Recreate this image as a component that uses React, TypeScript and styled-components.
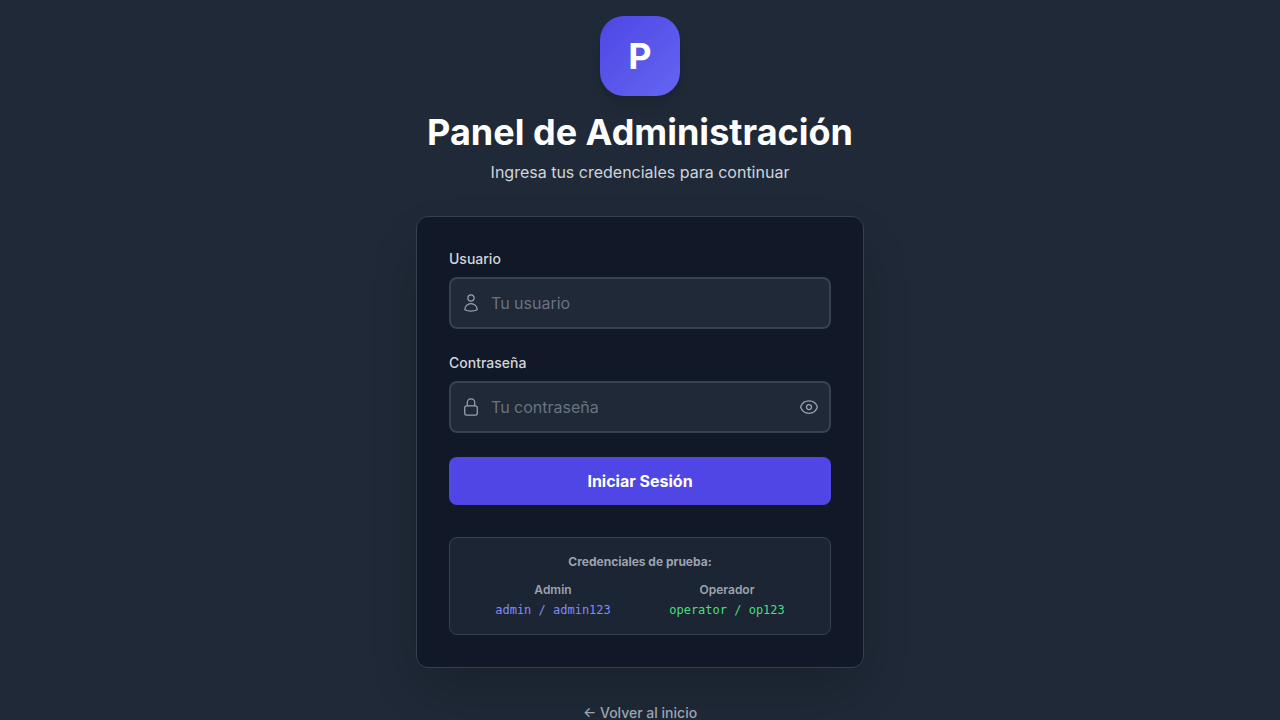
import React, { useState } from "react";
import styled, { createGlobalStyle } from "styled-components";
import { HiOutlineEye, HiOutlineEyeSlash, HiOutlineLockClosed, HiOutlineUser } from "react-icons/hi2";

const GlobalStyle = createGlobalStyle`
  *, *::before, *::after {
    box-sizing: border-box;
  }

  body {
    margin: 0;
    background: #1f2937;
    color: #ffffff;
    font-family: Inter, "Liberation Sans", sans-serif;
    font-size: 16px;
    line-height: 24px;
  }

  h1, h2, p {
    margin: 0;
  }
`;

const Page = styled.main`
  display: flex;
  align-items: center;
  justify-content: center;
  min-height: 100vh;
  padding: 16px;
`;

const Column = styled.div`
  width: 100%;
  max-width: 448px;
`;

const Header = styled.header`
  display: flex;
  flex-direction: column;
  align-items: center;
  margin-bottom: 32px;
  text-align: center;
`;

const Logo = styled.div`
  display: flex;
  align-items: center;
  justify-content: center;
  width: 80px;
  height: 80px;
  margin-bottom: 16px;
  border-radius: 24px;
  background: linear-gradient(to bottom right, #4f46e5, #6366f1);
  box-shadow: 0 10px 15px -3px rgba(0, 0, 0, 0.1), 0 4px 6px -4px rgba(0, 0, 0, 0.1);
  font-size: 36px;
  line-height: 40px;
  font-weight: 700;
`;

const Title = styled.h1`
  margin-bottom: 8px;
  font-size: 36px;
  line-height: 40px;
  font-weight: 700;
`;

const Subtitle = styled.p`
  color: #d1d5db;
`;

const Card = styled.section`
  padding: 32px;
  border: 1px solid #374151;
  border-radius: 12px;
  background: #111827;
  box-shadow: 0 25px 50px -12px rgba(0, 0, 0, 0.25);
`;

const Form = styled.form`
  display: flex;
  flex-direction: column;
  gap: 24px;
`;

const Field = styled.div`
  display: flex;
  flex-direction: column;
  gap: 8px;
`;

const Label = styled.label`
  color: #d1d5db;
  font-size: 14px;
  line-height: 20px;
  font-weight: 500;
`;

const InputFrame = styled.div`
  display: flex;
  align-items: center;
  gap: 10px;
  padding: 0 10px;
  border: 2px solid #374151;
  border-radius: 8px;
  background: #1f2937;
  color: #9ca3af;

  &:focus-within {
    border-color: #6366f1;
  }

  svg {
    display: block;
    flex: none;
    width: 20px;
    height: 20px;
  }
`;

const Input = styled.input`
  flex: 1;
  min-width: 0;
  height: 48px;
  padding: 0;
  border: 0;
  outline: 0;
  background: transparent;
  color: #ffffff;
  font: inherit;

  &::placeholder {
    color: #6b7280;
    opacity: 1;
  }
`;

const IconButton = styled.button`
  padding: 0;
  border: 0;
  background: transparent;
  color: inherit;
  cursor: pointer;
`;

const SubmitButton = styled.button`
  padding: 12px 16px;
  border: 0;
  border-radius: 8px;
  background: #4f46e5;
  color: #ffffff;
  font: inherit;
  font-weight: 700;
  cursor: pointer;

  &:hover {
    background: #4338ca;
  }
`;

const Credentials = styled.div`
  margin-top: 32px;
  padding: 16px;
  border: 1px solid #374151;
  border-radius: 8px;
  background: rgba(31, 41, 55, 0.8);
  color: #9ca3af;
  font-size: 12px;
  line-height: 16px;
  text-align: center;
`;

const CredentialsTitle = styled.h2`
  margin-bottom: 12px;
  font-size: 12px;
  line-height: 16px;
  font-weight: 700;
`;

const CredentialsGrid = styled.div`
  display: grid;
  grid-template-columns: 1fr 1fr;
`;

const Credential = styled.div`
  display: flex;
  flex-direction: column;
  gap: 4px;
`;

const Role = styled.p`
  font-weight: 600;
`;

const Code = styled.code<{ $color: string }>`
  color: ${({ $color }) => $color};
  font-family: "DejaVu Sans Mono", monospace;
  font-size: 12px;
  line-height: 16px;
`;

const Footer = styled.footer`
  margin-top: 32px;
  text-align: center;
`;

const BackLink = styled.a`
  color: #9ca3af;
  font-size: 14px;
  line-height: 20px;
  font-weight: 500;
  text-decoration: none;

  &:hover {
    color: #ffffff;
  }
`;

export default function App() {
  const [showPassword, setShowPassword] = useState(false);

  return (
    <>
      <GlobalStyle />
      <Page>
        <Column>
          <Header>
            <Logo>P</Logo>
            <Title>Panel de Administración</Title>
            <Subtitle>Ingresa tus credenciales para continuar</Subtitle>
          </Header>

          <Card>
            <Form onSubmit={(event) => event.preventDefault()}>
              <Field>
                <Label htmlFor="username">Usuario</Label>
                <InputFrame>
                  <HiOutlineUser aria-hidden />
                  <Input id="username" type="text" placeholder="Tu usuario" autoComplete="username" />
                </InputFrame>
              </Field>

              <Field>
                <Label htmlFor="password">Contraseña</Label>
                <InputFrame>
                  <HiOutlineLockClosed aria-hidden />
                  <Input
                    id="password"
                    type={showPassword ? "text" : "password"}
                    placeholder="Tu contraseña"
                    autoComplete="current-password"
                  />
                  <IconButton
                    type="button"
                    aria-label={showPassword ? "Ocultar contraseña" : "Mostrar contraseña"}
                    onClick={() => setShowPassword(!showPassword)}
                  >
                    {showPassword ? <HiOutlineEyeSlash /> : <HiOutlineEye />}
                  </IconButton>
                </InputFrame>
              </Field>

              <SubmitButton type="submit">Iniciar Sesión</SubmitButton>
            </Form>

            <Credentials>
              <CredentialsTitle>Credenciales de prueba:</CredentialsTitle>
              <CredentialsGrid>
                <Credential>
                  <Role>Admin</Role>
                  <Code $color="#818cf8">admin / admin123</Code>
                </Credential>
                <Credential>
                  <Role>Operador</Role>
                  <Code $color="#4ade80">operator / op123</Code>
                </Credential>
              </CredentialsGrid>
            </Credentials>
          </Card>

          <Footer>
            <BackLink href="#inicio">← Volver al inicio</BackLink>
          </Footer>
        </Column>
      </Page>
    </>
  );
}
